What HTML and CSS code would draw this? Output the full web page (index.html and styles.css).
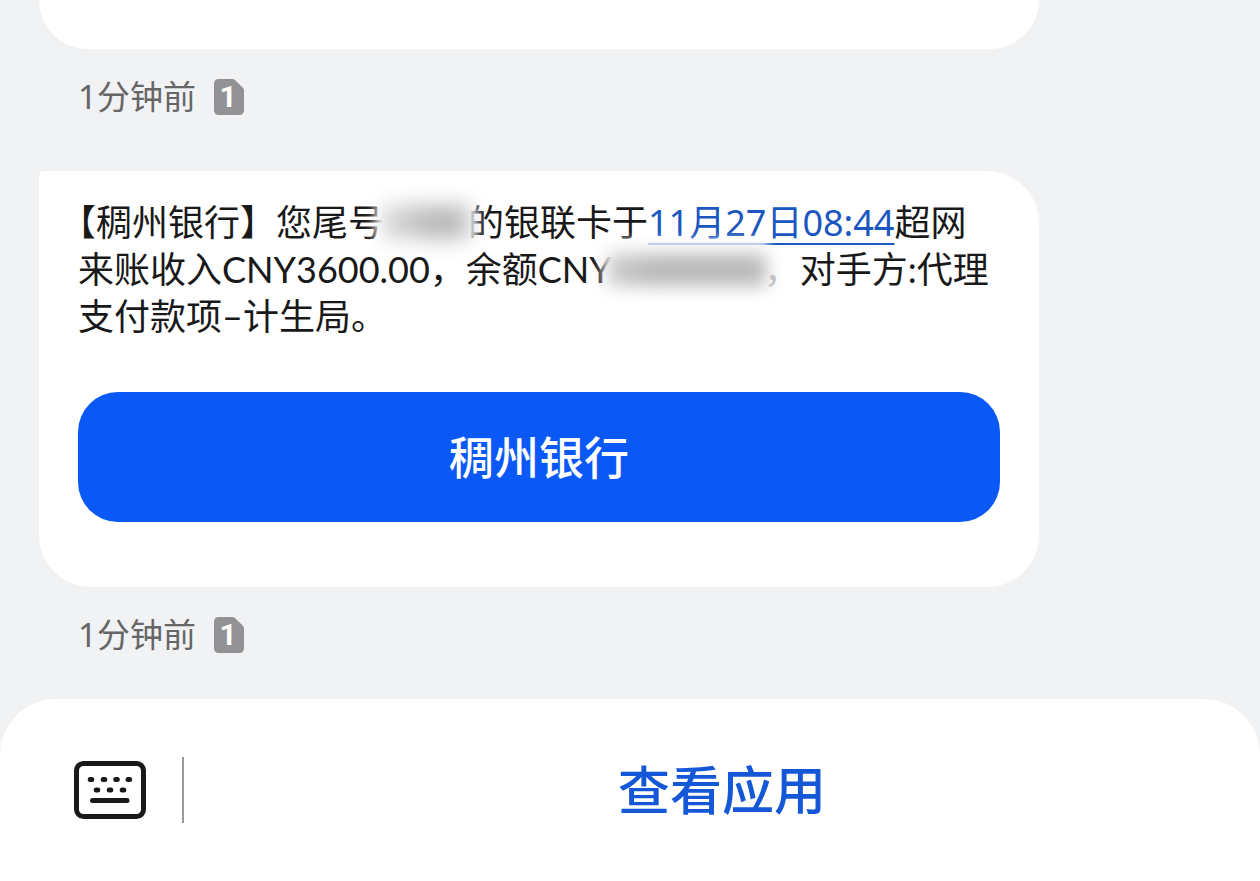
FILE: index.html
```
<!DOCTYPE html>
<html lang="zh-CN">

<head>
    <meta charset="UTF-8">
    <meta name="viewport" content="width=device-width, initial-scale=1.0">
    <title>稠州银行</title>
    <link rel="stylesheet" href="styles.css">
</head>

<body>

    <main class="messages">
        <div class="bubble bubble-previous"></div>
        <div class="meta">
            <span>1分钟前</span>
            <svg class="sim" viewBox="0 0 30 36" role="img" aria-label="SIM 1">
                <path d="M5 0H18.500Q20 0 21.200 1.200L28.600 8.400Q30 9.800 30 11.500V31Q30 36 25 36H5Q0 36 0 31V5Q0 0 5 0Z" />
                <text x="14" y="28">1</text>
            </svg>
        </div>

        <div class="bubble">
            <p>【稠州银行】您尾号<span class="redacted card-number"></span>的银联卡于<a href="#">11月27日08:44</a>超网来账收入CNY3600.00，余额CNY<span class="redacted balance"></span><span class="faded">，</span>对手方:代理支付款项–计生局。</p>
            <button type="button" class="bank-button">稠州银行</button>
        </div>
        <div class="meta">
            <span>1分钟前</span>
            <svg class="sim" viewBox="0 0 30 36" role="img" aria-label="SIM 1">
                <path d="M5 0H18.500Q20 0 21.200 1.200L28.600 8.400Q30 9.800 30 11.500V31Q30 36 25 36H5Q0 36 0 31V5Q0 0 5 0Z" />
                <text x="14" y="28">1</text>
            </svg>
        </div>
    </main>

    <footer class="toolbar">
        <button type="button" class="keyboard-button" aria-label="键盘">
            <svg viewBox="0 0 72 60">
                <rect x="2.500" y="3.500" width="67" height="53" rx="7" stroke-width="5" />
                <path stroke-width="5" stroke-linecap="round" d="M16.200 19.500h1.600M29.200 19.500h1.600M41.700 19.500h1.600M54 19.500h1.600M22.200 30h1.600M35.200 30h1.600M48.200 30h1.600" />
                <path stroke-width="5" stroke-linecap="round" d="M18.500 40.500H53" />
            </svg>
        </button>
        <button type="button" class="app-button">查看应用</button>
    </footer>

</body>

</html>
```

FILE: styles.css
```
* {
    box-sizing: border-box;
}

body {
    margin: 0;
    min-height: 100vh;
    display: flex;
    flex-direction: column;
    background-color: #f1f2f4;
    color: #191919;
    font-family: Lato, "Noto Sans CJK SC", sans-serif;
}

button {
    border: none;
    padding: 0;
    background: none;
    font-family: inherit;
    cursor: pointer;
}

.messages {
    padding: 0 221px 0 39px;
}

.bubble {
    padding: 28px 39px 65px;
    background-color: #fff;
    border-radius: 5px 52px 52px 52px;
}

.bubble-previous {
    padding: 49px 0 0;
    border-radius: 0 0 52px 52px;
}

.bubble p {
    margin: 0 0 52px;
    font-size: 36px;
    line-height: 47px;
    text-spacing-trim: trim-start;
}

.bubble a {
    position: relative;
    color: #1b57c0;
    font-family: "Noto Sans", "Noto Sans CJK SC", sans-serif;
    text-decoration: underline;
    text-decoration-thickness: 2px;
    text-underline-offset: 7px;
    text-decoration-skip-ink: none;
}

.redacted {
    display: inline-block;
    position: relative;
    height: 36px;
    vertical-align: -5px;
}

.redacted::before,
.redacted::after {
    content: "";
    position: absolute;
}

/* light haze over the neighbouring text, darker smudge on top */
.redacted::before {
    inset: -4px -8px;
    background-color: rgba(255, 255, 255, 0.9);
    filter: blur(5px);
}

.redacted::after {
    inset: 0 -2px 2px -2px;
    background: linear-gradient(90deg, #ddd, #b8b8b8 60%, #b8b8b8 80%, #ccc);
    filter: blur(10px);
}

.card-number {
    width: 84px;
}

.balance {
    width: 152px;
    z-index: 1;
}

.balance::before {
    inset: -12px -4px 0 -8px;
}

.balance::after {
    inset: 2px -2px 2px -4px;
    background: linear-gradient(90deg, #ccc, #b8b8b8 30%, #b8b8b8);
    filter: blur(9px);
}

.faded {
    color: #bbb;
}

.bank-button {
    display: block;
    width: 100%;
    height: 130px;
    padding-bottom: 4px;
    border-radius: 40px;
    background-color: #0a59f7;
    color: #fff;
    font-size: 45px;
    font-weight: 500;
}

.meta {
    display: flex;
    align-items: center;
    gap: 18px;
    padding: 28px 39px 54px;
    color: #666;
    font-family: "Noto Sans", "Noto Sans CJK SC", sans-serif;
    font-size: 33px;
    line-height: 40px;
}

.meta:last-child {
    padding-bottom: 44px;
}

.sim {
    width: 30px;
    height: 36px;
    overflow: visible;
    fill: #929294;
}

.sim text {
    fill: #fff;
    font-family: Roboto, sans-serif;
    font-size: 30px;
    font-weight: bold;
    text-anchor: middle;
}

.toolbar {
    flex: 1;
    display: flex;
    align-items: flex-start;
    padding: 58px 0 58px 74px;
    background-color: #fff;
    border-radius: 56px 56px 0 0;
}

.keyboard-button {
    display: flex;
    align-items: center;
    height: 66px;
    padding-right: 36px;
    border-right: 2px solid #999;
}

.keyboard-button svg {
    width: 72px;
    height: 60px;
    fill: none;
    stroke: #191919;
}

.app-button {
    flex: 1;
    color: #1458d8;
    font-size: 52px;
    font-weight: 500;
    line-height: 66px;
}
```
